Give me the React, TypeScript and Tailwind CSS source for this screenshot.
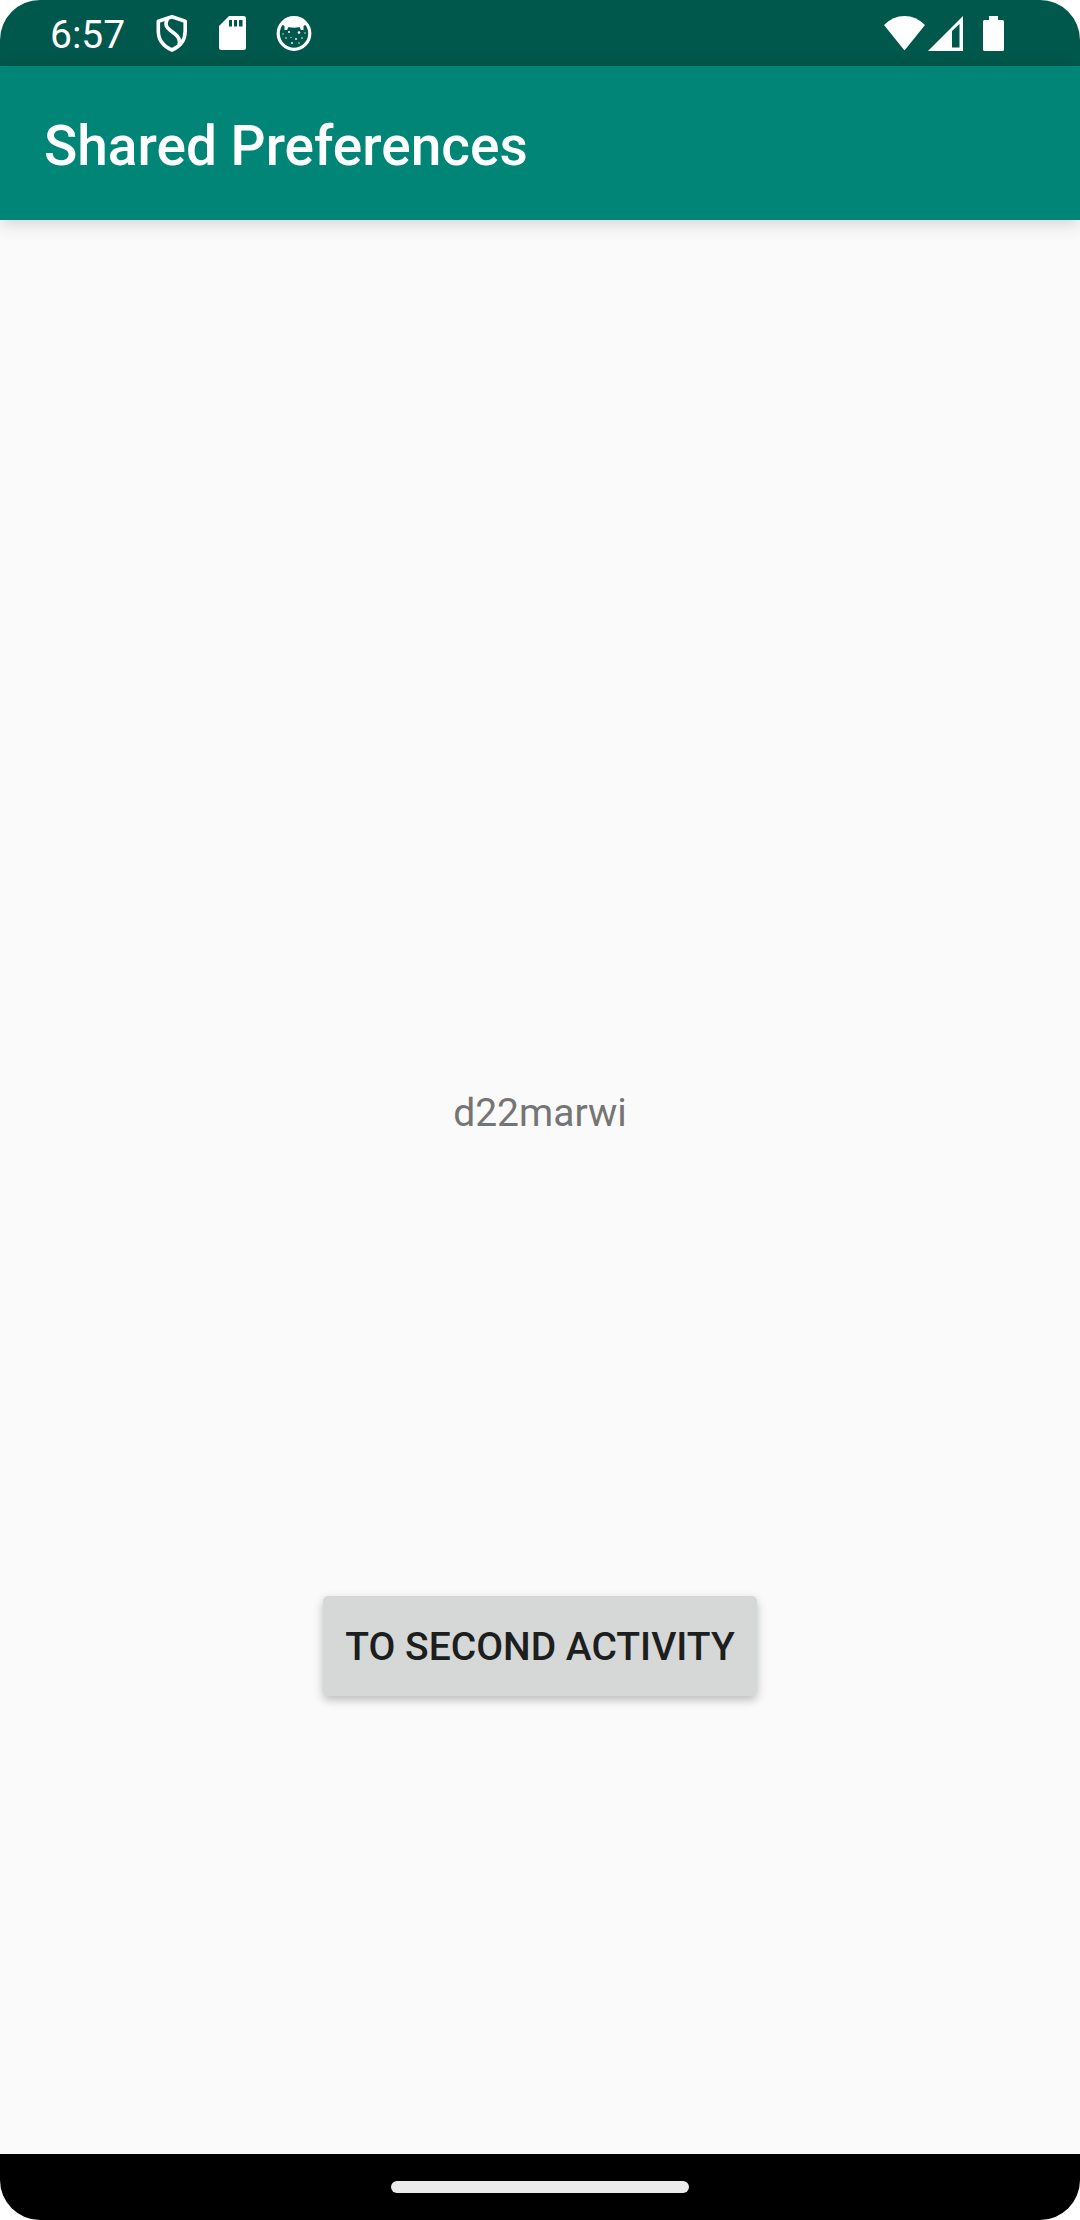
function StatusBar() {
  return (
    <header className="flex h-[66px] shrink-0 items-center bg-[#00574b] pl-[50px] pr-[76px] text-white">
      <time className="pt-[3px] text-[39px] leading-[46px]">6:57</time>
      <svg className="ml-[31px] h-[38px] w-8 shrink-0" viewBox="0 0 32 38" fill="none" stroke="currentColor" strokeWidth="3.6" strokeLinejoin="round" aria-hidden="true">
        <path d="M16 2.800 L29.200 7.200 V17 C29.200 26 24 32.500 16 36 C8 32.500 2.300 26 2.300 17 V7.200 Z" />
        <path d="M11.500 4.500 C8.500 11 10.500 13.500 14.500 16.500 L19 20 C23 23 24.500 26 23 30.500" />
      </svg>
      <svg className="ml-[31px] h-[34px] w-7 shrink-0" viewBox="0 0 28 34" aria-hidden="true">
        <path fill="currentColor" fillRule="evenodd" d="M10 0 H24.500 Q27 0 27 2.500 V31.500 Q27 34 24.500 34 H2.500 Q0 34 0 31.500 V10 Z M10 4 V10.500 H13 V4 Z M15 4 V10.500 H18 V4 Z M20 4 V10.500 H23.500 V4 Z" />
      </svg>
      <svg className="ml-[29px] h-9 w-9 shrink-0" viewBox="0 0 36 36" aria-hidden="true">
        <circle cx="18" cy="18.500" r="15.800" fill="none" stroke="currentColor" strokeWidth="3.200" />
        <path fill="currentColor" d="M5 9 Q10 1.500 18 1.500 T31 9 L27.500 11 V15 L25 15 L23.500 12 Q18 13.500 12.500 12 L11 15 L8.500 15 V11 Z" />
        <g fill="currentColor">
          <circle cx="13" cy="17" r="1" /><circle cx="23" cy="17.500" r="1.300" />
          <circle cx="7" cy="19" r=".7" /><circle cx="29" cy="18" r=".7" />
          <circle cx="10" cy="23" r=".8" /><circle cx="15" cy="22.500" r=".6" />
          <circle cx="20" cy="24" r=".9" /><circle cx="26" cy="23" r=".8" />
          <circle cx="16" cy="28" r=".9" /><circle cx="23" cy="28" r=".7" />
        </g>
      </svg>
      <svg className="ml-auto h-[35px] w-[41px] shrink-0" viewBox="0 0 41 35" fill="currentColor" aria-hidden="true">
        <path d="M0 9 Q9 0 20.500 0 T41 9 L20.500 34.500 Z" />
      </svg>
      <svg className="ml-[3px] h-[35px] w-[35px] shrink-0" viewBox="0 0 35 35" fill="currentColor" fillRule="evenodd" aria-hidden="true">
        <path d="M35 0 V35 H0 Z M24 15 V31.500 H31.500 V8 Z" />
      </svg>
      <svg className="ml-5 h-[35px] w-[21px] shrink-0" viewBox="0 0 21 35" fill="currentColor" aria-hidden="true">
        <path d="M6 0 H15 V4 H19.500 Q21 4 21 5.500 V33.500 Q21 35 19.500 35 H1.500 Q0 35 0 33.500 V5.500 Q0 4 1.500 4 H6 Z" />
      </svg>
    </header>
  );
}

export default function App() {
  return (
    <div className="flex min-h-screen flex-col overflow-hidden rounded-[40px] bg-[#fafafa] font-[Roboto,sans-serif]">
      <StatusBar />
      <div className="flex h-[154px] shrink-0 items-center bg-[#008577] px-11 pt-1.5 shadow-[0_4px_16px_rgba(0,0,0,0.15)]">
        <h1 className="text-[55px] font-medium leading-[64px] text-white">Shared Preferences</h1>
      </div>
      <main className="flex grow flex-col items-center pb-0.5">
        <div className="grow-[19]" />
        <p className="text-[39px] leading-[52px] text-[#757575]">d22marwi</p>
        <div className="grow-[10]" />
        <button type="button" className="h-[100px] rounded-[5px] bg-[#d6d8d7] px-[22px] pt-0.5 text-[39px] font-medium uppercase leading-[52px] text-[#1d1e1e] shadow-[0_4px_10px_rgba(0,0,0,0.25)]">
          To second activity
        </button>
        <div className="grow-[10]" />
      </main>
      <footer className="flex h-[66px] shrink-0 items-center justify-center bg-black">
        <div className="h-3 w-[298px] rounded-full bg-[#ebebeb]" />
      </footer>
    </div>
  );
}
